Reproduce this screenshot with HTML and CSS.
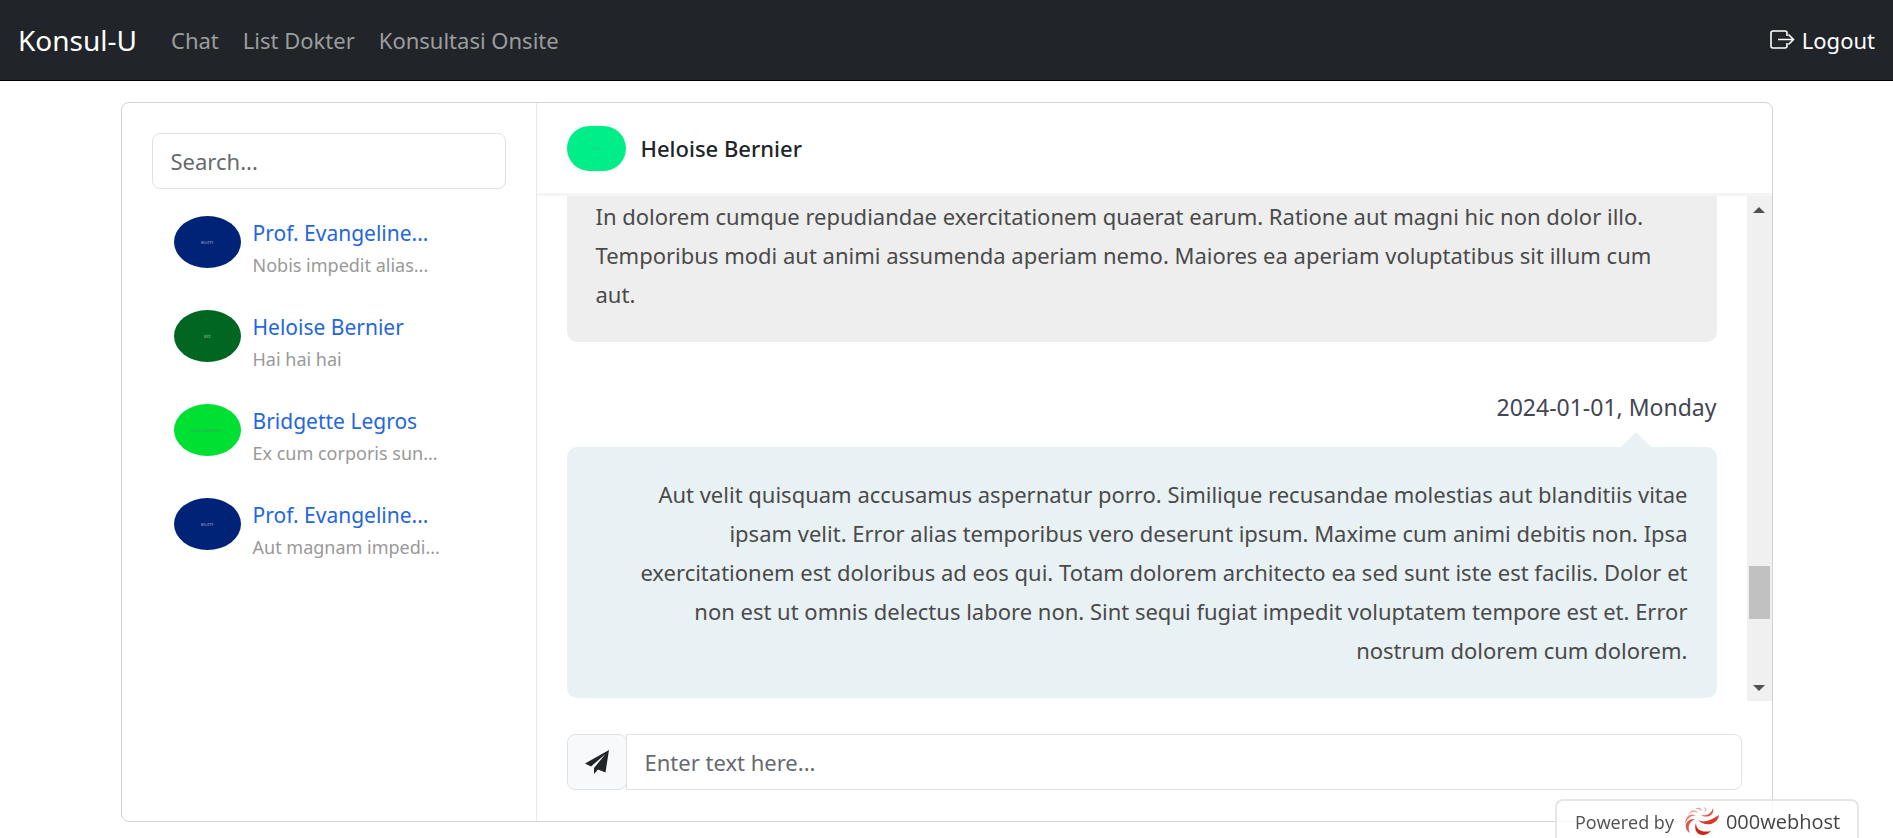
FILE: index.html
```html
<!DOCTYPE html>
<html lang="id">
<head>
<meta charset="utf-8">
<meta name="viewport" content="width=device-width, initial-scale=1">
<title>Konsul-U</title>
<link rel="stylesheet" href="styles.css">
</head>
<body>
<nav class="navbar">
  <a class="brand" href="#">Konsul-U</a>
  <a class="nav-link" href="#">Chat</a>
  <a class="nav-link" href="#">List Dokter</a>
  <a class="nav-link" href="#">Konsultasi Onsite</a>
  <a class="logout" href="#">
    <svg class="logout-icon" viewBox="0 0 25 20" aria-hidden="true"><path d="M17 6V3a2 2 0 0 0-2-2H3a2 2 0 0 0-2 2v13a2 2 0 0 0 2 2h12a2 2 0 0 0 2-2v-3" fill="none" stroke="currentColor" stroke-width="1.600"/><path d="M8 9.500h15.500M18.500 4.500l5 5-5 5" fill="none" stroke="currentColor" stroke-width="1.600"/></svg>
    Logout</a>
</nav>
<main class="card">
  <aside class="sidebar">
    <input class="field search" type="text" placeholder="Search..." aria-label="Search">
    <ul class="contacts">
      <li class="contact">
        <span class="avatar navy">eum</span>
        <div class="about"><a class="name" href="#">Prof. Evangeline...</a><div class="preview">Nobis impedit alias...</div></div>
      </li>
      <li class="contact">
        <span class="avatar forest">sit</span>
        <div class="about"><a class="name" href="#">Heloise Bernier</a><div class="preview">Hai hai hai</div></div>
      </li>
      <li class="contact">
        <span class="avatar lime">voluptatem</span>
        <div class="about"><a class="name" href="#">Bridgette Legros</a><div class="preview">Ex cum corporis sun...</div></div>
      </li>
      <li class="contact">
        <span class="avatar navy">eum</span>
        <div class="about"><a class="name" href="#">Prof. Evangeline...</a><div class="preview">Aut magnam impedi...</div></div>
      </li>
    </ul>
  </aside>
  <section class="chat">
    <header class="chat-header">
      <span class="chat-avatar">aut</span>
      <h1 class="chat-name">Heloise Bernier</h1>
    </header>
    <div class="history">
      <div class="messages">
        <p class="message other">In dolorem cumque repudiandae exercitationem quaerat earum. Ratione aut magni hic non dolor illo.<br>Temporibus modi aut animi assumenda aperiam nemo. Maiores ea aperiam voluptatibus sit illum cum<br>aut.</p>
        <div class="date">2024-01-01, Monday</div>
        <p class="message mine">Aut velit quisquam accusamus aspernatur porro. Similique recusandae molestias aut blanditiis vitae<br>ipsam velit. Error alias temporibus vero deserunt ipsum. Maxime cum animi debitis non. Ipsa<br>exercitationem est doloribus ad eos qui. Totam dolorem architecto ea sed sunt iste est facilis. Dolor et<br>non est ut omnis delectus labore non. Sint sequi fugiat impedit voluptatem tempore est et. Error<br>nostrum dolorem cum dolorem.</p>
      </div>
      <div class="scrollbar" aria-hidden="true">
        <svg class="arrow" viewBox="0 0 12 6"><path d="M6 0l6 6H0z" fill="#505050"/></svg>
        <div class="track"><div class="thumb"></div></div>
        <svg class="arrow" viewBox="0 0 12 6"><path d="M0 0h12L6 6z" fill="#505050"/></svg>
      </div>
    </div>
    <form class="composer">
      <button class="send" type="button" aria-label="Send">
        <svg class="send-icon" viewBox="0 0 24 24" aria-hidden="true"><path d="M24 0L0 13.500l6 3L20.500 4 9 18v6l4-4.500 7.500 3z" fill="#212529"/></svg>
      </button>
      <input class="field text" type="text" placeholder="Enter text here..." aria-label="Message">
    </form>
  </section>
</main>
<a class="host" href="#">
  <span class="powered">Powered by</span>
  <svg class="host-logo" viewBox="0 0 34 29" aria-hidden="true">
    <path d="M13 13c5 3 12 1 21-5-1 9-13 13-21 5z" fill="#d63a2d"/>
    <path d="M11 16c0 7 6 10 15 8-7 8-19 3-15-8z" fill="#cb2419"/>
    <path d="M16 8c4 1 10 0 12-7 2 7-6 11-12 7z" fill="#dd5146"/>
    <path d="M10 12c-6 3-8 8-5 14-8-5-4-15 5-14z" fill="#dc554b"/>
    <path d="M11 9C6 8 3 11 0 17 0 9 6 5 11 9z" fill="#e88780"/>
    <path d="M13 6C9 4 6 5 3 8c2-6 8-6 10-2z" fill="#efaaa5"/>
    <path d="M16 4c-1-2-3-2-6-2 4-3 8 0 6 2zM19 5c2-1 2-3-1-5 5 1 4 5 1 5z" fill="#eda19b"/>
  </svg>
  <span class="host-name">000webhost</span>
</a>
</body>
</html>
```
FILE: styles.css
```css
* { box-sizing: border-box; }
body {
  margin: 0;
  background: #fff;
  color: #212529;
  font-family: "Noto Sans", "Open Sans", sans-serif;
  font-size: 22px;
  line-height: 36px;
}
a { text-decoration: none; }

.navbar {
  display: flex;
  align-items: center;
  gap: 24px;
  min-height: 81px;
  padding: 0 18px;
  background: #212529;
  border-bottom: 1px solid #000;
}
.brand { margin-right: 10px; font-size: 28px; color: #fff; }
.nav-link { color: #9b9d9e; }
.logout { display: flex; align-items: center; gap: 7px; margin-left: auto; color: #fff; }
.logout-icon { width: 25px; height: 20px; }

.card {
  display: grid;
  grid-template-columns: 415px 1fr;
  max-width: 1652px;
  margin: 21px auto 0;
  border: 1px solid #d3d3d3;
  border-radius: 8px;
}
.sidebar { padding: 30px; border-right: 1px solid #e6e7e9; }
.field {
  width: 100%;
  height: 56px;
  padding: 0 18px;
  border: 1px solid #dfe2e5;
  border-radius: 8px;
  background: #fff;
  font: inherit;
  color: #212529;
}
.field::placeholder { color: #666a6e; opacity: 1; }

.contacts { margin: 15px 0 0; padding: 0; list-style: none; }
.contact { display: flex; gap: 12px; height: 94px; padding: 12px 22px; }
.avatar {
  display: flex;
  flex: none;
  align-items: center;
  justify-content: center;
  width: 67px;
  height: 52px;
  border-radius: 50%;
  font-size: 6px;
  color: rgba(255, 255, 255, .5);
}
.navy { background: #002277; }
.forest { background: #006622; }
.lime { background: #00e033; color: #30b055; }
.about { white-space: nowrap; }
.name { display: block; font-size: 21px; line-height: 34px; color: #2466dd; }
.preview { font-size: 18px; line-height: 30px; color: #999; }

.chat { display: flex; flex-direction: column; min-width: 0; }
.chat-header {
  display: flex;
  align-items: center;
  gap: 15px;
  height: 93px;
  padding: 0 30px;
  border-bottom: 3px solid #f5f5f5;
}
.chat-avatar {
  display: flex;
  align-items: center;
  justify-content: center;
  width: 59px;
  height: 45px;
  border-radius: 23px;
  background: #00ee88;
  font-size: 6px;
  color: #30cc88;
}
.chat-name { margin: 0; font-size: 22px; font-weight: 500; }

.history { display: flex; height: 505px; }
.messages {
  display: flex;
  flex: 1;
  flex-direction: column;
  justify-content: flex-end;
  min-width: 0;
  padding: 0 30px 3px;
  overflow: hidden;
}
.message {
  position: relative;
  margin: 0;
  padding: 28px 29px;
  border-radius: 10px;
  line-height: 39px;
  color: #4a4a4a;
  white-space: nowrap;
}
.other { background: #eee; }
.date { margin: 47px 0 22px; font-size: 23px; text-align: right; color: #434651; }
.mine { background: #e8f1f3; text-align: right; }
.mine::before {
  content: "";
  position: absolute;
  right: 66px;
  bottom: 100%;
  border: 15px solid transparent;
  border-top: 0;
  border-bottom-color: #e8f1f3;
}

.scrollbar {
  display: flex;
  flex: none;
  flex-direction: column;
  align-items: center;
  width: 25px;
  padding: 11px 2px 10px;
  background: #f0f0f0;
}
.arrow { width: 12px; height: 6px; }
.track {
  display: flex;
  flex: 1;
  flex-direction: column;
  justify-content: flex-end;
  width: 100%;
  padding-bottom: 66px;
}
.thumb { height: 53px; background: #c1c1c1; }

.composer { display: flex; padding: 33px 30px 31px; }
.send {
  display: flex;
  flex: none;
  align-items: center;
  justify-content: center;
  width: 60px;
  height: 56px;
  padding: 0;
  border: 1px solid #dfe2e5;
  border-radius: 8px;
  background: #f8f9fb;
}
.send-icon { width: 24px; height: 24px; }
.text { margin-left: -1px; border-radius: 0 8px 8px 0; }

.host {
  position: fixed;
  right: 34px;
  bottom: 0;
  display: flex;
  align-items: center;
  width: 304px;
  height: 39px;
  padding: 4px 18px 0;
  border: 2px solid #e6e6e6;
  border-bottom: 0;
  border-radius: 8px 8px 0 0;
  background: rgba(255, 255, 255, .8);
  font-family: "Open Sans", sans-serif;
  font-size: 18px;
  color: #505050;
  white-space: nowrap;
}
.host-logo { flex: none; width: 34px; height: 29px; margin: 0 7px 0 11px; }
.host-name { font-weight: 500; font-size: 20px; color: #444; }
```
